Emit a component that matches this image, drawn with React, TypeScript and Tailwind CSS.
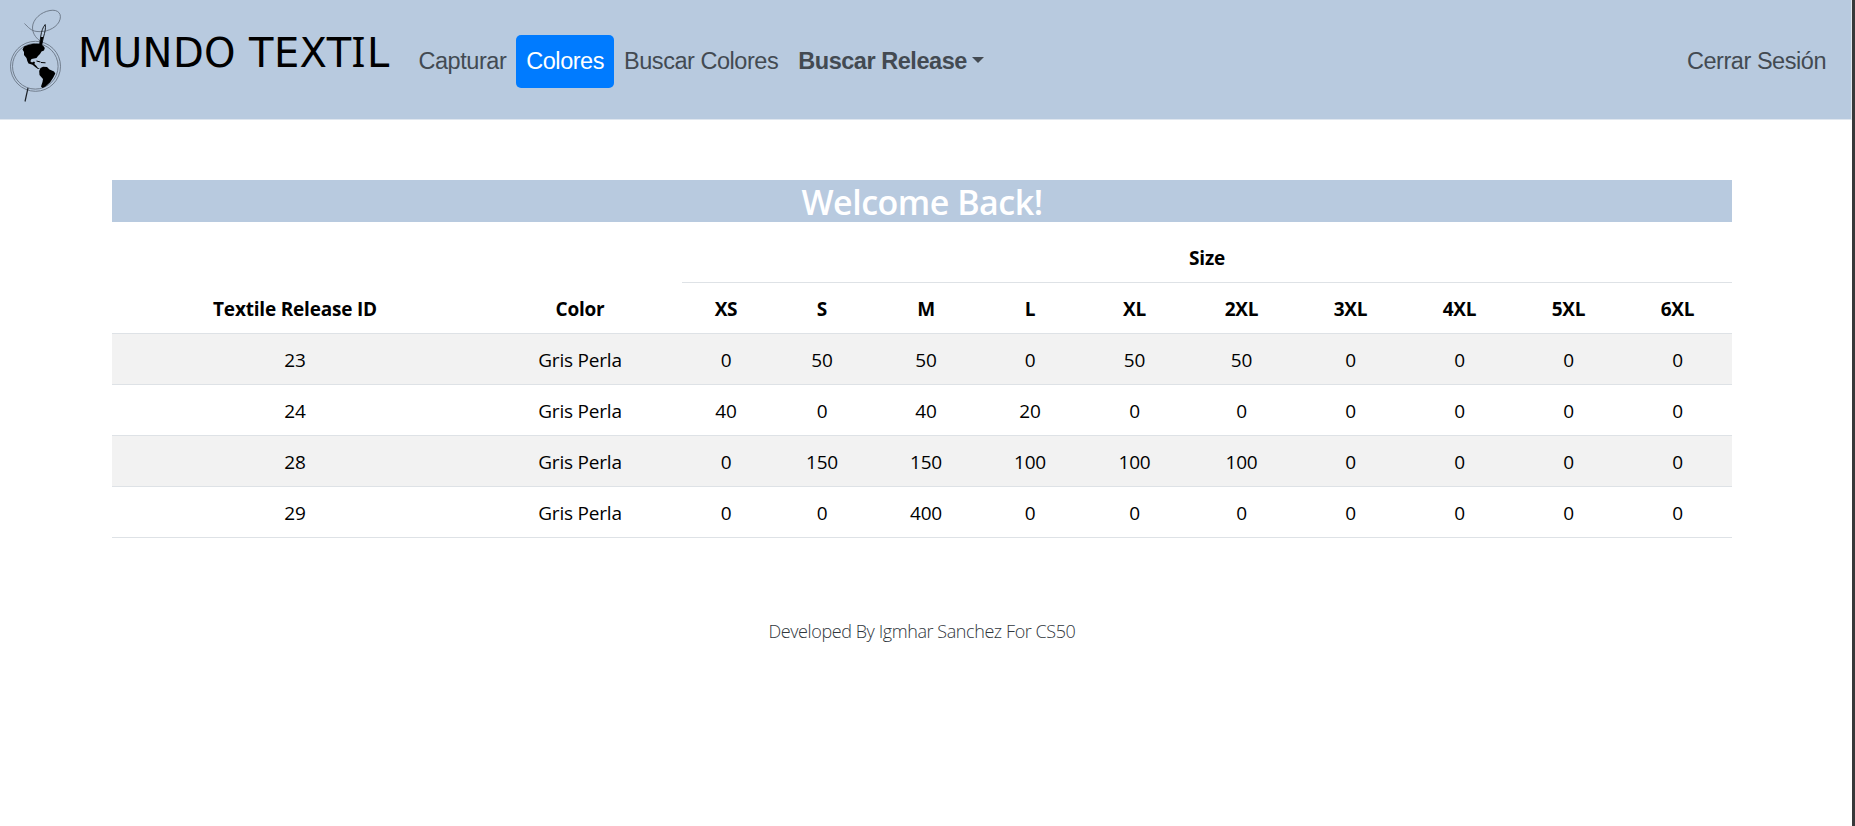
const sizes = ['XS', 'S', 'M', 'L', 'XL', '2XL', '3XL', '4XL', '5XL', '6XL'];

const releases = [
  { id: 23, color: 'Gris Perla', amounts: [0, 50, 50, 0, 50, 50, 0, 0, 0, 0] },
  { id: 24, color: 'Gris Perla', amounts: [40, 0, 40, 20, 0, 0, 0, 0, 0, 0] },
  { id: 28, color: 'Gris Perla', amounts: [0, 150, 150, 100, 100, 100, 0, 0, 0, 0] },
  { id: 29, color: 'Gris Perla', amounts: [0, 0, 400, 0, 0, 0, 0, 0, 0, 0] },
];

const columnWidths = [
  'w-[366px]', 'w-[204px]', 'w-[88px]', 'w-[104px]', 'w-[104px]', 'w-[104px]',
  'w-[105px]', 'w-[109px]', 'w-[109px]', 'w-[109px]', 'w-[109px]', 'w-[109px]',
];

function Logo() {
  return (
    <svg className="h-[110px] w-[70px] shrink-0" viewBox="0 0 70 110" fill="none">
      <g stroke="#5f6b79" strokeWidth="0.8">
        <circle cx="35.5" cy="66.3" r="25" />
        <circle cx="35.3" cy="66.3" r="22.8" />
        <path d="M24.5 23.5C28 27 31 31 37 31.5C45 32.5 55 29 59 22C63 14 58 9 50 10.5C41 12 33 19 32.5 27C32.5 33 35 37 40 41" />
      </g>
      <path d="M28 88L25 101.5" stroke="#1c2127" strokeWidth="1.2" />
      <path d="M45.2 24.5C43 27 41.5 31 40.8 36L39.5 45H41.7L43.5 37C45 32 46 28 45.2 24.5Z" stroke="#1c2127" strokeWidth="1" />
      <path d="M40.8 37L39.5 45H41.8L43.3 37Z" fill="#000" />
      <path d="M22.5 49.5L24 46.5L28 45L33 43.8L39 43.8L43 45.5L44.8 48L44 50.5L41.5 51.5L40 54L38 56L36.5 58L34 58.5L31.5 59L30.3 61.3L32 62.5L34 61.5L35 62.5L34.4 64L36 65.5L38 68L40 68.5L38 69L35.5 67.3L32.5 64.8L28.5 63.5L27.3 61L26.5 58L24 55L24 52Z" fill="#000" />
      <path d="M36.5 61L40.5 62M41 62.5L45.5 62.8" stroke="#000" strokeWidth="1" />
      <path d="M40.5 68L43 66.8L47 67L49.5 69.5L54 71.5L55.3 73.5L53 78L50 82.5L45.5 86.5L42.5 88L41 86.5L42.5 82L43 79L39.5 75L39.2 71Z" fill="#000" />
    </svg>
  );
}

export default function App() {
  return (
    <div className="flex h-[826px] overflow-hidden bg-white font-['Open_Sans','Noto_Sans',sans-serif] text-black">
      <div className="flex min-w-0 flex-1 flex-col">
        <nav className="flex h-[120px] items-start border-r border-b border-[#dfe6ef] bg-[#b8cadf] font-['Liberation_Sans',Arial,sans-serif] text-[23.5px] leading-[33px] tracking-[-0.46px] text-[#434a52]">
          <Logo />
          <div className="w-[338.5px] shrink-0 pt-7 pl-[8px] font-['DejaVu_Sans',Verdana,sans-serif] text-[40px] leading-[50px] tracking-[0.4px] whitespace-nowrap text-black">
            MUNDO TEXT<span className="font-['Noto_Sans',sans-serif] text-[41px] leading-none tracking-[1.5px]">I</span>L
          </div>
          <ul className="flex pt-[35px] whitespace-nowrap">
            <li className="px-[10px] py-[10px]">Capturar</li>
            <li className="rounded-[5px] bg-[#007bff] px-[10px] py-[10px] text-white">Colores</li>
            <li className="px-[10px] py-[10px]">Buscar Colores</li>
            <li className="flex items-start px-[10px] py-[10px] font-bold">
              Buscar Release
              <span className="mt-[12px] ml-[5px] border-x-6 border-t-6 border-x-transparent border-t-[#434a52]" />
            </li>
          </ul>
          <div className="ml-auto pt-[45px] pr-[25px]">Cerrar Sesión</div>
        </nav>

        <main className="ml-[112px] w-[1620px] pt-[60px]">
          <h1 className="mb-[10px] h-[42px] bg-[#b8cadf] text-center text-[34px] leading-[44px] font-semibold tracking-[-0.5px] text-white">
            Welcome Back!
          </h1>
          <table className="w-[1620px] table-fixed border-separate border-spacing-0 text-center text-[19px] leading-[30px] tracking-[-0.2px]">
            <colgroup>
              {columnWidths.map((width, i) => (
                <col key={i} className={width} />
              ))}
            </colgroup>
            <thead>
              <tr className="h-[51px]">
                <th colSpan={2} />
                <th colSpan={10} className="border-b border-[#dee2e6] p-0 pt-[2px] font-bold">Size</th>
              </tr>
              <tr className="h-[51px]">
                {['Textile Release ID', 'Color', ...sizes].map((label) => (
                  <th key={label} className="border-b border-[#dee2e6] p-0 pt-[2px] font-bold">{label}</th>
                ))}
              </tr>
            </thead>
            <tbody>
              {releases.map((release) => (
                <tr key={release.id} className="h-[51px] odd:bg-[#f2f2f2]">
                  {[release.id, release.color, ...release.amounts].map((value, i) => (
                    <td key={i} className="border-b border-[#dee2e6] p-0 pt-[2px]">{value}</td>
                  ))}
                </tr>
              ))}
            </tbody>
          </table>
          <footer className="pt-[78px] text-center text-[18px] leading-[30px] font-light tracking-[-0.42px] text-[#30363c]">
            Developed By Igmhar Sanchez For CS50
          </footer>
        </main>
      </div>
      <div className="w-[3px] shrink-0 bg-[#38393a]" />
    </div>
  );
}
